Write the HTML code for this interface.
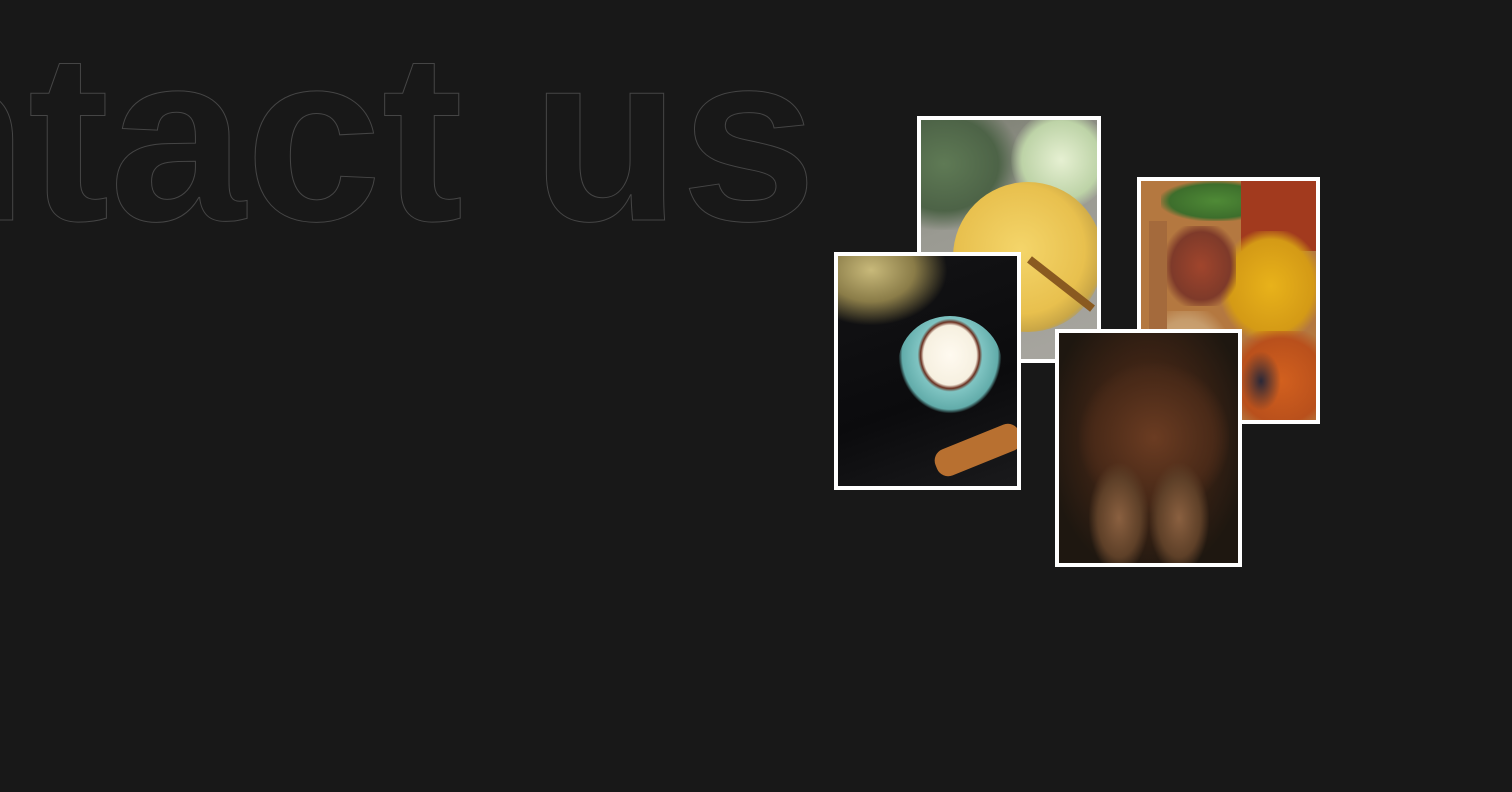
<!DOCTYPE html>
<html><head><meta charset="utf-8"><style>
html,body{margin:0;padding:0;background:#181818;width:1512px;height:792px;overflow:hidden;position:relative}
.t{position:absolute;left:-448px;top:17px;font-family:"Liberation Sans",sans-serif;font-weight:bold;font-size:240px;letter-spacing:0;color:transparent;-webkit-text-stroke:1px #454545;white-space:nowrap;line-height:1;transform:scaleX(1.02);transform-origin:0 0}
.c{position:absolute;box-sizing:border-box;border:4px solid #fff;overflow:hidden}
.c div{position:absolute}
</style></head><body>
<div class="t">Contact us</div>

<div class="c" style="left:917px;top:116px;width:184px;height:247px;background:linear-gradient(160deg,#7a7d70 0%,#9a9a92 40%,#a8a6a0 100%)">
 <div style="left:-10px;top:0;width:110px;height:110px;background:radial-gradient(ellipse at 30% 40%,#5f7a55,#4d6347 50%,transparent 72%)"></div>
 <div style="left:90px;top:-10px;width:100px;height:100px;border-radius:50%;background:radial-gradient(circle,#e6f0d2,#bdd3a7 55%,transparent 72%)"></div>
 <div style="left:32px;top:62px;width:150px;height:150px;border-radius:50%;background:radial-gradient(circle at 45% 45%,#f4d56a,#e8c04e 55%,#c9a646 70%,#a69d80 75%,transparent 78%)"></div>
 <div style="left:100px;top:160px;width:80px;height:8px;background:#8a5a20;transform:rotate(38deg)"></div>
</div>

<div class="c" style="left:1137px;top:177px;width:183px;height:247px;background:#b47840">
 <div style="left:20px;top:0;width:110px;height:40px;background:radial-gradient(ellipse,#4f8a36,#3d6e2c 60%,transparent 75%)"></div>
 <div style="left:100px;top:0;width:90px;height:70px;background:#a23a1e"></div>
 <div style="left:80px;top:50px;width:100px;height:110px;background:radial-gradient(ellipse,#e8b21a,#d49a16 60%,transparent 75%)"></div>
 <div style="left:25px;top:45px;width:70px;height:80px;background:radial-gradient(ellipse,#a0452c,#7e3a2a 60%,transparent 80%)"></div>
 <div style="left:90px;top:150px;width:100px;height:100px;background:radial-gradient(ellipse,#d2601e,#b9501c 60%,transparent 80%)"></div>
 <div style="left:0;top:130px;width:90px;height:120px;background:radial-gradient(ellipse,#d8b48a,#c69c6c 60%,transparent 80%)"></div>
 <div style="left:100px;top:170px;width:40px;height:60px;background:radial-gradient(ellipse,#2a2838,transparent 70%)"></div>
 <div style="left:8px;top:40px;width:18px;height:120px;background:#a46a3c"></div>
</div>

<div class="c" style="left:834px;top:252px;width:187px;height:238px;background:linear-gradient(160deg,#141416,#0b0b0d 60%,#1a1a1c)">
 <div style="left:0;top:0;width:110px;height:70px;background:radial-gradient(ellipse at 30% 20%,#c8b97a,#8a7c48 40%,transparent 70%)"></div>
 <div style="left:60px;top:60px;width:104px;height:98px;border-radius:50% 50% 48% 48%;background:radial-gradient(ellipse at 50% 40%,#fffaf0 0,#f6f0e0 36%,#6b3020 40%,#7fc4c2 44%,#62acaa 65%,transparent 70%)"></div>
 <div style="left:95px;top:180px;width:90px;height:28px;border-radius:12px;background:#b87030;transform:rotate(-22deg)"></div>
</div>

<div class="c" style="left:1055px;top:329px;width:187px;height:238px;background:radial-gradient(ellipse at 50% 45%,#5a3520,#3a2214 45%,#1e1710 80%)">
 <div style="left:20px;top:30px;width:150px;height:150px;background:radial-gradient(ellipse,#6b3c22,#4a2a18 55%,transparent 72%)"></div>
 <div style="left:30px;top:130px;width:60px;height:110px;background:radial-gradient(ellipse,#8a6040,#5e4028 50%,transparent 72%)"></div>
 <div style="left:90px;top:130px;width:60px;height:110px;background:radial-gradient(ellipse,#8a6040,#5e4028 50%,transparent 72%)"></div>
</div>
</body></html>
